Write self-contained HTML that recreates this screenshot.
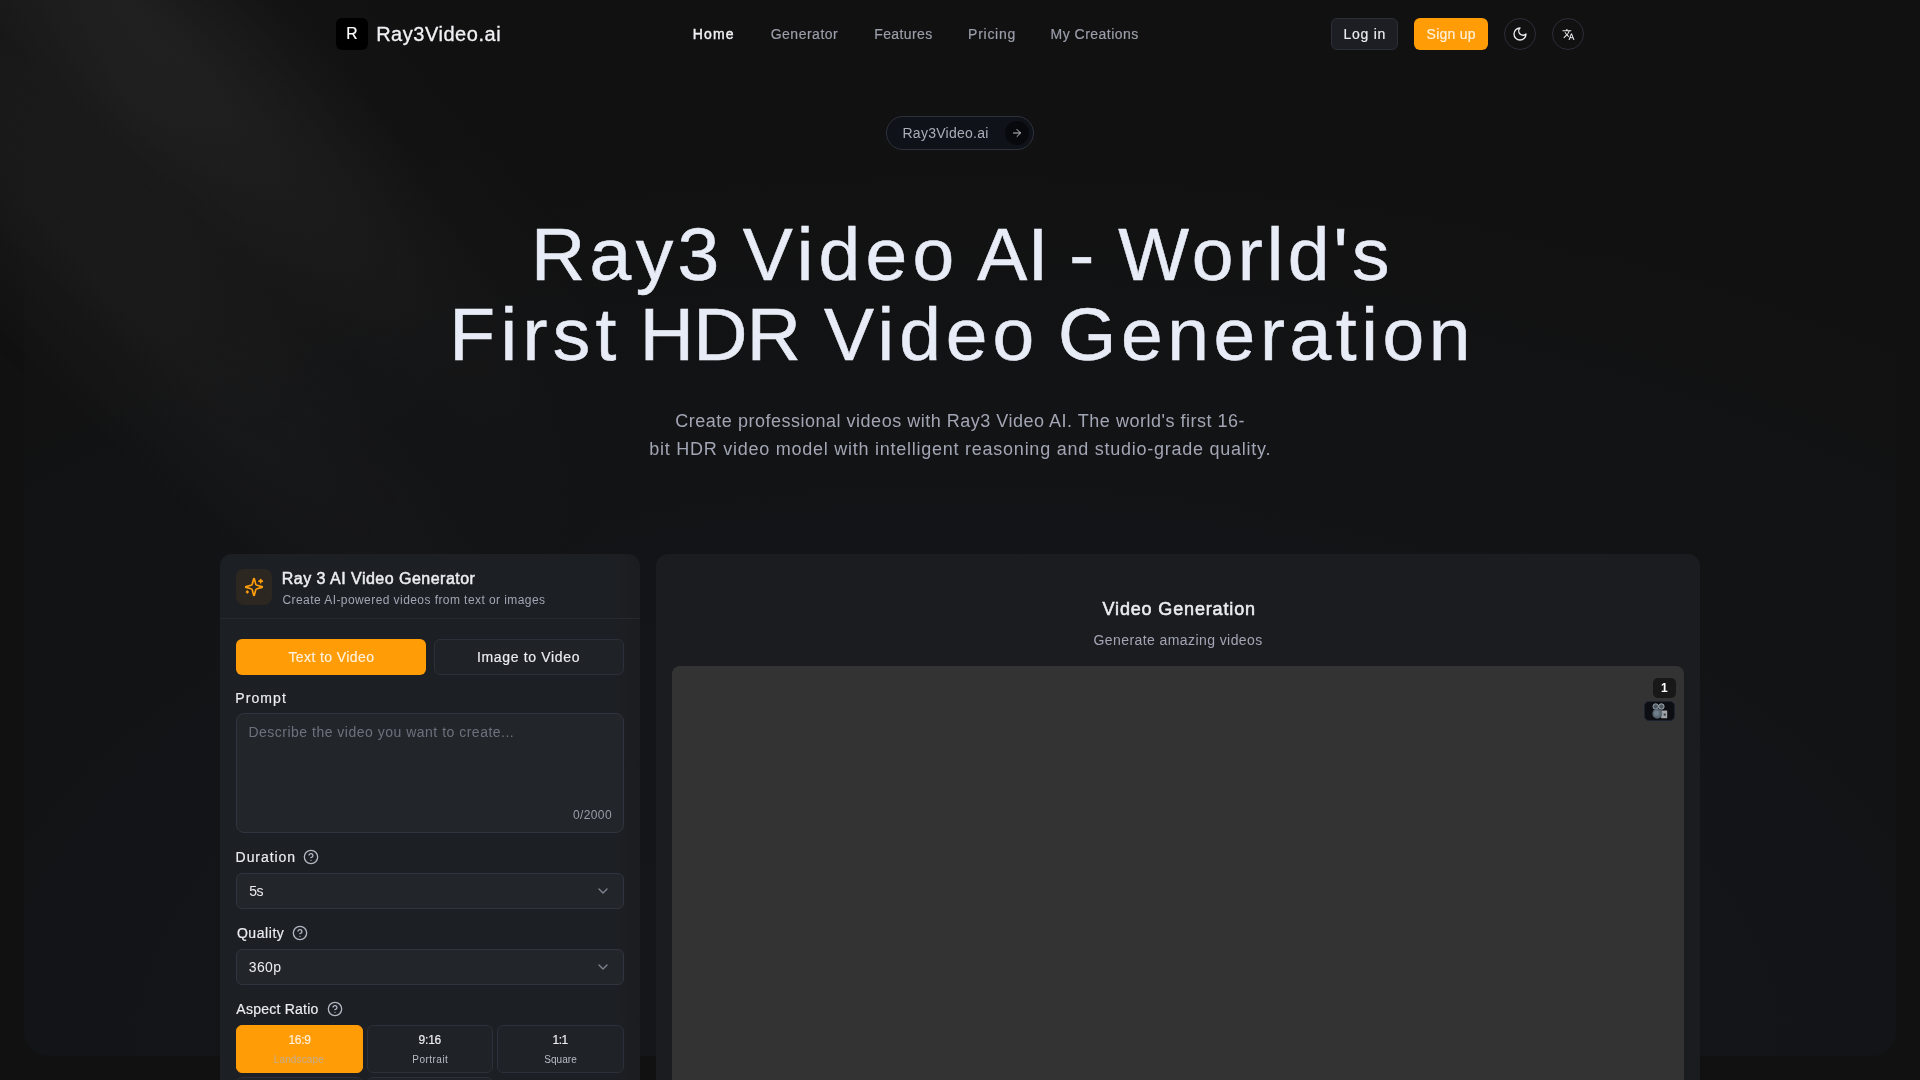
<!DOCTYPE html>
<html lang="en">
<head>
<meta charset="utf-8">
<title>Ray3 Video AI - World's First HDR Video Generation</title>
<style>
*{box-sizing:border-box;margin:0;padding:0}
html,body{width:1920px;height:1080px;overflow:hidden;background:#111111}
body{font-family:"Liberation Sans","Noto Sans CJK SC",sans-serif;color:#ececf1;position:relative}
.abs{position:absolute}
.t{position:absolute;white-space:nowrap;line-height:1}
svg{display:block}
header,nav,main,section,h1,h2,h3,p,label{display:contents;font:inherit}
.spot{position:absolute;left:0;top:0;width:1920px;height:1080px;overflow:hidden;opacity:.7;pointer-events:none}
.spot div{position:absolute;left:0;top:0}
.s1{width:560px;height:1280px;transform:translateY(-350px) rotate(-45deg);border-radius:9999px;background:radial-gradient(68.54% 68.72% at 55.02% 31.46%,hsla(0,0%,85%,.08) 0,hsla(0,0%,55%,.02) 50%,hsla(0,0%,45%,0) 80%)}
.s2{width:224px;height:1280px;translate:5% -50%;transform:rotate(-45deg);border-radius:9999px;background:radial-gradient(50% 50% at 50% 50%,hsla(0,0%,85%,.06) 0,hsla(0,0%,45%,.02) 80%,transparent 100%)}
.s3{width:224px;height:1280px;transform:translateY(-350px) rotate(-45deg);background:radial-gradient(50% 50% at 50% 50%,hsla(0,0%,85%,.04) 0,hsla(0,0%,45%,.02) 80%,transparent 100%)}
.panel{position:absolute;left:24px;top:0;width:1872px;height:1056px;border-radius:0 0 24px 24px;background:#15171c;overflow:hidden}
.panel:after{content:"";position:absolute;inset:0;background:radial-gradient(125% 125% at 50% 100%,transparent 0%,#111111 75%)}
.logo{left:336px;top:18px;width:32px;height:32px;border-radius:6px;background:#000}
.btn{position:absolute;top:18px;height:32px;border-radius:6px}
.circ{position:absolute;top:18px;width:32px;height:32px;border-radius:50%;border:1px solid #2b2d38;display:flex;align-items:center;justify-content:center}
.pill{left:886px;top:116px;width:148px;height:34px;border-radius:17px;border:1px solid #2d323d;background:#0f1218}
.card{position:absolute;background:#1b1d21;border-radius:12px}
.field{position:absolute;left:236px;width:388px;background:#22262b;border:1px solid #31343f;border-radius:6px}
.ar{position:absolute;height:48px;border-radius:6px;border:1px solid #2d303a;background:#1f2227}
</style>
</head>
<body>
<div id="root" style="position:absolute;left:0;top:0;width:1920px;height:1080px;will-change:transform">
<div class="panel"></div>
<div class="spot"><div class="s1"></div><div class="s2"></div><div class="s3"></div></div>

<!-- NAV -->
<header>
<div class="abs logo"></div>
<div class="t" style="left:346.34px;top:26.46px;font-size:15.7px;color:#ffffff;-webkit-text-stroke:0.18px #ffffff;">R</div>
<div class="t" style="left:376.15px;top:24.07px;font-size:20px;color:#f1f1f5;letter-spacing:0.531px;-webkit-text-stroke:0.3px #f1f1f5;">Ray3Video.ai</div>
<nav>
<div class="t" style="left:692.71px;top:27.15px;font-size:14px;color:#f1f1f5;letter-spacing:1.147px;-webkit-text-stroke:0.42px #f1f1f5;">Home</div>
<div class="t" style="left:770.69px;top:27.15px;font-size:14px;color:#9b9eab;letter-spacing:0.503px;-webkit-text-stroke:0.18px #9b9eab;">Generator</div>
<div class="t" style="left:874.19px;top:27.15px;font-size:14px;color:#9b9eab;letter-spacing:0.407px;-webkit-text-stroke:0.18px #9b9eab;">Features</div>
<div class="t" style="left:968.09px;top:27.15px;font-size:14px;color:#9b9eab;letter-spacing:0.732px;-webkit-text-stroke:0.18px #9b9eab;">Pricing</div>
<div class="t" style="left:1050.59px;top:27.15px;font-size:14px;color:#9b9eab;letter-spacing:0.476px;-webkit-text-stroke:0.18px #9b9eab;">My Creations</div>
</nav>
<div class="btn" style="left:1331px;width:67px;background:#1c1e23;border:1px solid #2b2e37"></div>
<div class="t" style="left:1343.59px;top:27.05px;font-size:14px;color:#ececf1;letter-spacing:0.728px;-webkit-text-stroke:0.18px #ececf1;">Log in</div>
<div class="btn" style="left:1414px;width:74px;background:#ff9c06"></div>
<div class="t" style="left:1426.59px;top:27.05px;font-size:14px;color:#fff1dd;letter-spacing:0.259px;-webkit-text-stroke:0.18px #fff1dd;">Sign up</div>
<div class="circ" style="left:1504px"><svg width="16" height="16" viewBox="0 0 24 24" fill="none" stroke="#ececf1" stroke-width="2" stroke-linecap="round" stroke-linejoin="round"><path d="M12 3a6 6 0 0 0 9 9 9 9 0 1 1-9-9Z"/></svg></div>
<div class="circ" style="left:1552px"><svg width="13" height="13" viewBox="0 0 24 24" fill="#ececf1"><path d="M12.87,15.07L10.33,12.56L10.36,12.53C12.1,10.59 13.34,8.36 14.07,6H17V4H10V2H8V4H1V6H12.17C11.5,7.92 10.44,9.75 9,11.35C8.07,10.32 7.3,9.19 6.69,8H4.69C5.42,9.63 6.42,11.17 7.67,12.56L2.58,17.58L4,19L9,14L12.11,17.11L12.87,15.07M18.5,10H16.5L12,22H14L15.12,19H19.87L21,22H23L18.5,10M15.88,17L17.5,12.67L19.12,17H15.88Z"/></svg></div>
</header>

<!-- HERO -->
<main>
<section>
<div class="abs pill"></div>
<div class="t" style="left:902.50px;top:125.95px;font-size:14px;color:#a9adba;letter-spacing:0.263px;">Ray3Video.ai</div>
<div class="abs" style="left:1005px;top:121px;width:24px;height:24px;border-radius:50%;background:#07090d;display:flex;align-items:center;justify-content:center"><svg width="12" height="12" viewBox="0 0 24 24" fill="none" stroke="#c6c8d0" stroke-width="2" stroke-linecap="round" stroke-linejoin="round"><path d="M5 12h14"/><path d="m12 5 7 7-7 7"/></svg></div>
<h1>
<span class="t" style="left:531.02px;top:217.11px;font-size:75px;color:#e8ecf6;letter-spacing:4.375px;-webkit-text-stroke:0.55px #e8ecf6;">Ray3 </span>
<span class="t" style="left:742.77px;top:217.11px;font-size:75px;color:#e8ecf6;letter-spacing:5.249px;-webkit-text-stroke:0.55px #e8ecf6;">Video </span>
<span class="t" style="left:977.27px;top:217.11px;font-size:75px;color:#e8ecf6;letter-spacing:0.226px;-webkit-text-stroke:0.55px #e8ecf6;">AI </span>
<span class="t" style="left:1069.15px;top:217.11px;font-size:75px;color:#e8ecf6;-webkit-text-stroke:0.55px #e8ecf6;">- </span>
<span class="t" style="left:1118.28px;top:217.11px;font-size:75px;color:#e8ecf6;letter-spacing:4.156px;-webkit-text-stroke:0.55px #e8ecf6;">World's </span>
<span class="t" style="left:449.27px;top:297.01px;font-size:75px;color:#e8ecf6;letter-spacing:5.325px;-webkit-text-stroke:0.55px #e8ecf6;">First </span>
<span class="t" style="left:639.77px;top:297.01px;font-size:75px;color:#e8ecf6;letter-spacing:-0.663px;-webkit-text-stroke:0.55px #e8ecf6;">HDR </span>
<span class="t" style="left:824.02px;top:297.01px;font-size:75px;color:#e8ecf6;letter-spacing:4.936px;-webkit-text-stroke:0.55px #e8ecf6;">Video </span>
<span class="t" style="left:1058.03px;top:297.01px;font-size:75px;color:#e8ecf6;letter-spacing:4.598px;-webkit-text-stroke:0.55px #e8ecf6;">Generation</span>
</h1>
<p>
<div class="t" style="left:675.30px;top:411.66px;font-size:18px;color:#a2a6b4;letter-spacing:0.510px;">Create professional videos with Ray3 Video AI. The world's first 16-</div>
<div class="t" style="left:649.25px;top:439.76px;font-size:18px;color:#a2a6b4;letter-spacing:0.749px;">bit HDR video model with intelligent reasoning and studio-grade quality.</div>
</p>
</section>

<!-- LEFT CARD -->
<section>
<div class="card" style="left:220px;top:554px;width:420px;height:560px;background:linear-gradient(90deg,#1c1f23 0,#1c1f23 94%,#1b1c20 100%)"></div>
<div class="abs" style="left:236px;top:569px;width:36px;height:36px;border-radius:8px;background:#2d2721;display:flex;align-items:center;justify-content:center"><svg width="20" height="20" viewBox="0 0 24 24" fill="none" stroke="#ff9f0a" stroke-width="2" stroke-linecap="round" stroke-linejoin="round"><path d="M9.937 15.5A2 2 0 0 0 8.5 14.063l-6.135-1.582a.5.5 0 0 1 0-.962L8.5 9.936A2 2 0 0 0 9.937 8.5l1.582-6.135a.5.5 0 0 1 .963 0L14.063 8.5A2 2 0 0 0 15.5 9.937l6.135 1.581a.5.5 0 0 1 0 .964L15.5 14.063a2 2 0 0 0-1.437 1.437l-1.582 6.135a.5.5 0 0 1-.963 0z"/><path d="M20 3v4"/><path d="M22 5h-4"/><path d="M4 17v2"/><path d="M5 18H3"/></svg></div>
<h2>
<div class="t" style="left:281.75px;top:571.06px;font-size:16px;color:#ececf1;letter-spacing:0.483px;-webkit-text-stroke:0.5px #ececf1;">Ray 3 AI Video Generator</div>
</h2>
<p>
<div class="t" style="left:282.50px;top:593.64px;font-size:12px;color:#a2a6b4;letter-spacing:0.429px;">Create AI-powered videos from text or images</div>
</p>
<div class="abs" style="left:220px;top:618px;width:420px;height:1px;background:#262930"></div>
<div class="abs" style="left:236px;top:639px;width:190px;height:36px;border-radius:6px;background:#ff9c06"></div>
<div class="t" style="left:288.39px;top:650.45px;font-size:14px;color:#fff1dd;letter-spacing:0.417px;-webkit-text-stroke:0.18px #fff1dd;">Text to Video</div>
<div class="abs" style="left:434px;top:639px;width:190px;height:36px;border-radius:6px;background:#1f2227;border:1px solid #2d303a"></div>
<div class="t" style="left:476.99px;top:650.45px;font-size:14px;color:#ececf1;letter-spacing:0.659px;-webkit-text-stroke:0.18px #ececf1;">Image to Video</div>
<label>
<div class="t" style="left:235.34px;top:691.45px;font-size:14px;color:#ececf1;letter-spacing:1.063px;-webkit-text-stroke:0.18px #ececf1;">Prompt</div>
</label>
<div class="field" style="top:713px;height:120px;border-radius:8px"></div>
<div class="t" style="left:248.40px;top:725.05px;font-size:14px;color:#6d717d;letter-spacing:0.499px;">Describe the video you want to create...</div>
<div class="t" style="left:573.10px;top:808.94px;font-size:12px;color:#9a9da8;letter-spacing:0.354px;">0/2000</div>
<label>
<div class="t" style="left:235.59px;top:849.95px;font-size:14px;color:#ececf1;letter-spacing:0.938px;-webkit-text-stroke:0.18px #ececf1;">Duration</div>
</label>
<svg class="abs" style="left:303px;top:849px" width="16" height="16" viewBox="0 0 24 24" fill="none" stroke="#b4b7c3" stroke-width="2" stroke-linecap="round" stroke-linejoin="round"><circle cx="12" cy="12" r="10"/><path d="M9.09 9a3 3 0 0 1 5.83 1c0 2-3 3-3 3"/><path d="M12 17h.01"/></svg>
<div class="field" style="top:873px;height:36px"></div>
<div class="t" style="left:249.25px;top:883.95px;font-size:14px;color:#ececf1;letter-spacing:-0.490px;">5s</div>
<svg class="abs" style="left:595px;top:883px" width="16" height="16" viewBox="0 0 24 24" fill="none" stroke="#80838f" stroke-width="2" stroke-linecap="round" stroke-linejoin="round"><path d="m6 9 6 6 6-6"/></svg>
<label>
<div class="t" style="left:236.89px;top:925.95px;font-size:14px;color:#ececf1;letter-spacing:0.571px;-webkit-text-stroke:0.18px #ececf1;">Quality</div>
</label>
<svg class="abs" style="left:292px;top:925px" width="16" height="16" viewBox="0 0 24 24" fill="none" stroke="#b4b7c3" stroke-width="2" stroke-linecap="round" stroke-linejoin="round"><circle cx="12" cy="12" r="10"/><path d="M9.09 9a3 3 0 0 1 5.83 1c0 2-3 3-3 3"/><path d="M12 17h.01"/></svg>
<div class="field" style="top:949px;height:36px"></div>
<div class="t" style="left:248.80px;top:959.95px;font-size:14px;color:#ececf1;letter-spacing:0.347px;">360p</div>
<svg class="abs" style="left:595px;top:959px" width="16" height="16" viewBox="0 0 24 24" fill="none" stroke="#80838f" stroke-width="2" stroke-linecap="round" stroke-linejoin="round"><path d="m6 9 6 6 6-6"/></svg>
<label>
<div class="t" style="left:236.34px;top:1002.35px;font-size:14px;color:#ececf1;letter-spacing:0.242px;-webkit-text-stroke:0.18px #ececf1;">Aspect Ratio</div>
</label>
<svg class="abs" style="left:327px;top:1001px" width="16" height="16" viewBox="0 0 24 24" fill="none" stroke="#b4b7c3" stroke-width="2" stroke-linecap="round" stroke-linejoin="round"><circle cx="12" cy="12" r="10"/><path d="M9.09 9a3 3 0 0 1 5.83 1c0 2-3 3-3 3"/><path d="M12 17h.01"/></svg>
<div class="ar" style="left:236px;top:1025px;width:127px;background:#ff9c06;border-color:#ff9c06"></div>
<div class="t" style="left:288.39px;top:1033.84px;font-size:12px;color:#fff1dd;letter-spacing:-0.244px;-webkit-text-stroke:0.18px #fff1dd;">16:9</div>
<div class="t" style="left:273.75px;top:1054.84px;font-size:10px;color:#c4ae92;letter-spacing:0.135px;">Landscape</div>
<div class="ar" style="left:367px;top:1025px;width:126px"></div>
<div class="t" style="left:418.59px;top:1033.84px;font-size:12px;color:#ececf1;letter-spacing:-0.227px;-webkit-text-stroke:0.18px #ececf1;">9:16</div>
<div class="t" style="left:412.30px;top:1054.84px;font-size:10px;color:#b9bcc6;letter-spacing:0.478px;">Portrait</div>
<div class="ar" style="left:497px;top:1025px;width:127px"></div>
<div class="t" style="left:552.44px;top:1033.84px;font-size:12px;color:#ececf1;letter-spacing:-0.450px;-webkit-text-stroke:0.18px #ececf1;">1:1</div>
<div class="t" style="left:544.20px;top:1054.84px;font-size:10px;color:#b9bcc6;letter-spacing:0.083px;">Square</div>
<div class="ar" style="left:236px;top:1077px;width:127px"></div>
<div class="ar" style="left:367px;top:1077px;width:126px"></div>
</section>

<!-- RIGHT CARD -->
<section>
<div class="card" style="left:656px;top:554px;width:1044px;height:560px;background:#1b1c20"></div>
<h3>
<div class="t" style="left:1102.53px;top:599.76px;font-size:18px;color:#ececf1;letter-spacing:0.849px;-webkit-text-stroke:0.55px #ececf1;">Video Generation</div>
</h3>
<p>
<div class="t" style="left:1093.50px;top:632.90px;font-size:14px;color:#a2a6b4;letter-spacing:0.419px;">Generate amazing videos</div>
</p>
<div class="abs" style="left:672px;top:666px;width:1012px;height:440px;border-radius:8px;background:#333333"></div>
<div class="abs" style="left:1653px;top:678px;width:23px;height:20px;border-radius:5px;background:#181818"></div>
<div class="t" style="left:1660.95px;top:681.64px;font-size:12px;color:#ffffff;font-weight:700;">1</div>
<div class="abs" style="left:1644px;top:701px;width:31px;height:20px;border-radius:5px;background:#0c0e13;border:1px solid #1a2230"></div>
<svg class="abs" style="left:1651.5px;top:702.5px" width="16" height="16" viewBox="0 0 16 16"><circle cx="3.7" cy="3.5" r="2.7" fill="#4d5760" stroke="#9aa3ab" stroke-width="1"/><circle cx="9.4" cy="3.5" r="2.7" fill="#4d5760" stroke="#a7afb6" stroke-width="1"/><rect x="9.2" y="7.6" width="6" height="7.6" rx=".5" fill="#9ea4aa"/><rect x="11.7" y="10.6" width="2" height="2" fill="#32373d"/><rect x=".4" y="6" width="9.8" height="9.4" rx="4.4" fill="#5a6873"/><circle cx="4.6" cy="10.2" r="2.6" fill="#6e7f8b"/></svg>
</section>
</main>
</div>
</body>
</html>
